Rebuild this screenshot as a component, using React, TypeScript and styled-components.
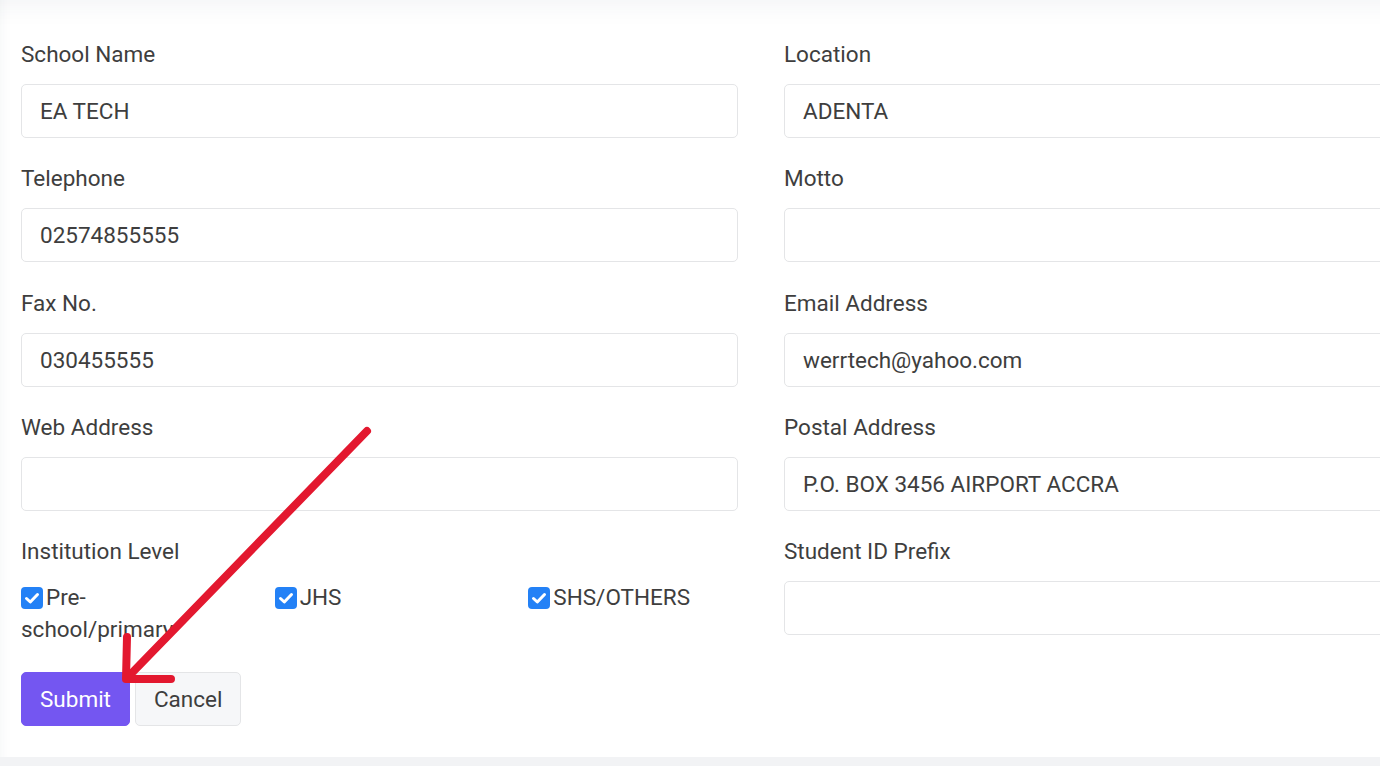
import React from "react";
import styled, { createGlobalStyle } from "styled-components";

const Global = createGlobalStyle`
  html, body { margin: 0; padding: 0; background: #f2f3f5; overflow: hidden; }
  body { font-family: Roboto, "Liberation Sans", Arial, sans-serif; }
  * { box-sizing: border-box; }
`;

const Page = styled.div`
  width: 1380px;
  height: 766px;
  overflow: hidden;
  background: #f2f3f5;
`;

const Card = styled.div`
  position: relative;
  width: 1520px;
  height: 757px;
  background: #ffffff;
  padding: 39px 0 0 21px;
  box-shadow: inset 0 30px 28px -28px rgba(40, 50, 80, 0.07),
    inset 14px 0 14px -14px rgba(40, 50, 80, 0.05);
`;

const Form = styled.form`
  display: grid;
  grid-template-columns: 717px 717px;
  column-gap: 46px;
`;

const Field = styled.div<{ $last?: boolean }>`
  display: flex;
  flex-direction: column;
  margin-bottom: ${(p) => (p.$last ? "0" : "25.25px")};
`;

const Label = styled.label`
  font-size: 22.5px;
  line-height: 30px;
  color: #3e3e3e;
  margin-bottom: 15px;
`;

const Input = styled.div`
  height: 54px;
  border: 1px solid #e4e5e7;
  border-radius: 5px;
  padding: 0 18px;
  display: flex;
  align-items: center;
  font-size: 22.5px;
  color: #3e3e3e;
  background: #fff;
`;

const CheckGrid = styled.div`
  display: grid;
  grid-template-columns: repeat(3, 1fr);
  column-gap: 44px;
`;

const CheckItem = styled.div`
  font-size: 22.5px;
  line-height: 32px;
  color: #3e3e3e;
`;

const Box = styled.svg`
  width: 22px;
  height: 22px;
  vertical-align: -4px;
  margin-right: 3px;
`;

const Actions = styled.div`
  display: flex;
  gap: 5px;
  margin-top: 27px;
`;

const Button = styled.button<{ $primary?: boolean }>`
  height: 54px;
  padding: 0 18px;
  border-radius: 5px;
  font-family: inherit;
  font-size: 22.5px;
  border: 1px solid ${(p) => (p.$primary ? "#7456f1" : "#e4e5e7")};
  background: ${(p) => (p.$primary ? "#7456f1" : "#f6f7f9")};
  color: ${(p) => (p.$primary ? "#ffffff" : "#3e3e3e")};
`;

const Arrow = styled.svg`
  position: absolute;
  left: 0;
  top: 0;
  width: 500px;
  height: 757px;
  pointer-events: none;
`;

const Check = ({ label }: { label: string }) => (
  <CheckItem>
    <Box viewBox="0 0 22 22">
      <rect x="0" y="0" width="22" height="22" rx="4" fill="#2381f6" />
      <path d="M5.5 11.5 L9.3 15 L16.5 7.5" fill="none" stroke="#fff" strokeWidth="3" strokeLinecap="round" strokeLinejoin="round" />
    </Box>
    {label}
  </CheckItem>
);

const fields: [string, string, string, string][] = [
  ["School Name", "EA TECH", "Location", "ADENTA"],
  ["Telephone", "02574855555", "Motto", ""],
  ["Fax No.", "030455555", "Email Address", "werrtech@yahoo.com"],
  ["Web Address", "", "Postal Address", "P.O. BOX 3456 AIRPORT ACCRA"],
];

export default function App() {
  return (
    <Page>
      <Global />
      <Card>
        <Form>
          {fields.map(([l1, v1, l2, v2]) => (
            <React.Fragment key={l1}>
              <Field>
                <Label>{l1}</Label>
                <Input>{v1}</Input>
              </Field>
              <Field>
                <Label>{l2}</Label>
                <Input>{v2}</Input>
              </Field>
            </React.Fragment>
          ))}
          <Field $last>
            <Label>Institution Level</Label>
            <CheckGrid>
              <Check label="Pre-school/primary" />
              <Check label="JHS" />
              <Check label="SHS/OTHERS" />
            </CheckGrid>
            <Actions>
              <Button type="button" $primary>Submit</Button>
              <Button type="button">Cancel</Button>
            </Actions>
          </Field>
          <Field $last>
            <Label>Student ID Prefix</Label>
            <Input />
          </Field>
        </Form>
        <Arrow viewBox="0 0 500 757">
          <g fill="none" stroke="#e3182f" strokeWidth="8" strokeLinecap="round" strokeLinejoin="round">
            <path d="M367 431 L127 678" />
            <path d="M127 637 L126 679 L171 679" />
          </g>
        </Arrow>
      </Card>
    </Page>
  );
}
